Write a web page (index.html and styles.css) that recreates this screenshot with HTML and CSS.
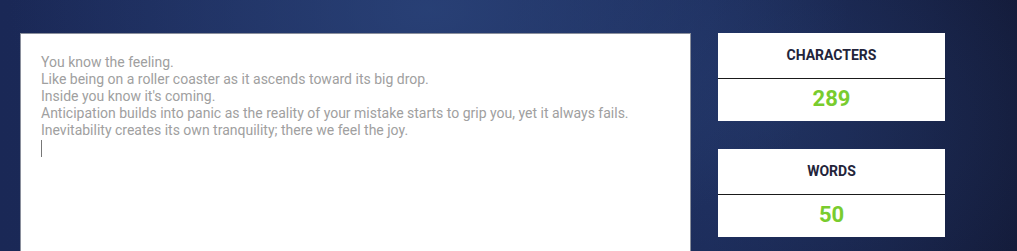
FILE: index.html
```html
<!DOCTYPE html>
<html>
<head>
<meta charset="utf-8">
<link rel="stylesheet" href="styles.css">
</head>
<body>
<div class="page">
  <div class="editor">
    <div class="line">You know the feeling.</div>
    <div class="line">Like being on a roller coaster as it ascends toward its big drop.</div>
    <div class="line">Inside you know it's coming.</div>
    <div class="line">Anticipation builds into panic as the reality of your mistake starts to grip you, yet it always fails.</div>
    <div class="line">Inevitability creates its own tranquility; there we feel the joy.</div>
    <div class="line"><span class="caret"></span></div>
  </div>
  <div class="stats">
    <div class="card">
      <div class="card-head">CHARACTERS</div>
      <div class="card-value">289</div>
    </div>
    <div class="card">
      <div class="card-head">WORDS</div>
      <div class="card-value">50</div>
    </div>
  </div>
</div>
</body>
</html>
```
FILE: styles.css
```css
html, body {
  margin: 0;
  height: 100%;
  overflow: hidden;
}
body {
  font-family: Roboto, "Liberation Sans", sans-serif;
  background:
    radial-gradient(ellipse 420px 260px at 430px 10px, rgba(44,70,125,0.75), rgba(44,70,125,0) 100%),
    radial-gradient(ellipse 300px 220px at 770px 120px, rgba(38,60,110,0.5), rgba(38,60,110,0) 100%),
    linear-gradient(90deg, #1a2856 0%, #1d2d5e 40%, #1b2a58 70%, #141c3b 100%);
}
.page {
  display: flex;
  align-items: flex-start;
  gap: 27px;
  padding: 33px 0 0 20px;
}
.editor {
  box-sizing: border-box;
  width: 671px;
  height: 218px;
  background: #fff;
  border: 1px solid #8a8f9c;
  border-bottom: none;
  padding: 20px 20px 0;
  font-size: 14px;
  line-height: 17px;
  color: #a0a0a0;
}
.line {
  height: 17px;
  white-space: nowrap;
}
.caret {
  display: inline-block;
  width: 1px;
  height: 17px;
  background: #777;
  vertical-align: top;
  margin-top: 1px;
}
.stats {
  display: flex;
  flex-direction: column;
  gap: 28px;
  width: 227px;
}
.card {
  background: #fff;
}
.card-head {
  height: 44px;
  border-bottom: 1px solid #1a1a1a;
  display: flex;
  align-items: center;
  justify-content: center;
  font-size: 14px;
  font-weight: 700;
  color: #23243a;
  padding-bottom: 1px;
  box-sizing: content-box;
}
.card-value {
  height: 42px;
  display: flex;
  align-items: center;
  justify-content: center;
  font-size: 22px;
  font-weight: 700;
  color: #79cc2e;
  padding-bottom: 3px;
  box-sizing: border-box;
}
```
